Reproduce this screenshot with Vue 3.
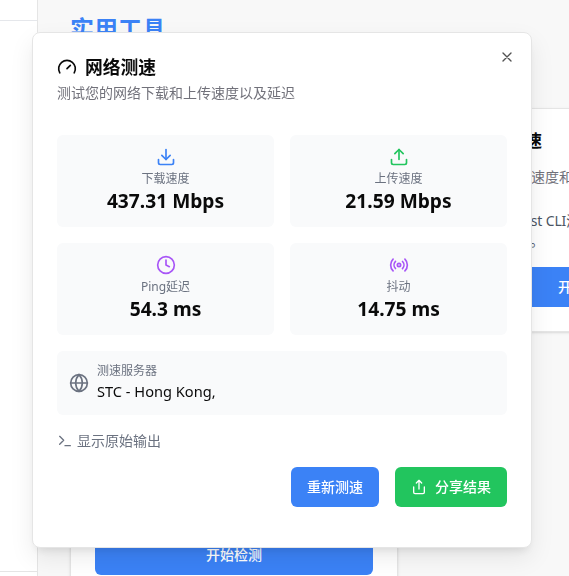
<script setup>
const stats = [
  { label: '下载速度', value: '437.31 Mbps', tone: 'blue', icon: ['M21 15v4a2 2 0 0 1-2 2H5a2 2 0 0 1-2-2v-4', 'M7 10l5 5 5-5', 'M12 15V3'] },
  { label: '上传速度', value: '21.59 Mbps', tone: 'green', icon: ['M21 15v4a2 2 0 0 1-2 2H5a2 2 0 0 1-2-2v-4', 'M17 8l-5-5-5 5', 'M12 3v12'] },
  { label: 'Ping延迟', value: '54.3 ms', tone: 'purple', icon: ['M22 12a10 10 0 1 1-20 0 10 10 0 0 1 20 0', 'M12 6v6l4 2'] },
  {
    label: '抖动', value: '14.75 ms', tone: 'purple',
    icon: [
      'M4.9 19.1C1 15.2 1 8.8 4.9 4.9',
      'M7.8 16.2c-2.3-2.3-2.3-6.1 0-8.5',
      'M14 12a2 2 0 1 1-4 0 2 2 0 0 1 4 0',
      'M16.2 7.8c2.3 2.3 2.3 6.1 0 8.5',
      'M19.1 4.9C23 8.8 23 15.1 19.1 19'
    ]
  }
]
</script>

<template>
  <div class="page">
    <aside class="sidebar">
      <div class="side-head"></div>
      <div class="side-body"></div>
    </aside>
    <main class="main">
      <h1 class="heading">实用工具</h1>
      <div class="tools">
        <section class="card"></section>
        <section class="card">
          <h2 class="card-title">
            <svg class="icon" viewBox="0 0 24 24"><path d="m12 14 4-4" /><path d="M3.34 19a10 10 0 1 1 17.32 0" /></svg>
            网络测速
          </h2>
          <p class="card-sub">测试您的网络速度和延迟</p>
          <p class="card-text">使用 Speedtest CLI测试<br />网络连接速度。</p>
          <button class="card-btn">开始测速</button>
        </section>
        <section class="card tall">
          <button class="card-btn">开始检测</button>
        </section>
      </div>
    </main>
  </div>

  <div class="overlay">
    <div class="dialog" role="dialog">
      <button class="close">
        <svg class="icon small" viewBox="0 0 24 24"><path d="M18 6 6 18M6 6l12 12" /></svg>
      </button>
      <header class="header">
        <h2 class="title">
          <svg class="icon" viewBox="0 0 24 24"><path d="m12 14 4-4" /><path d="M3.34 19a10 10 0 1 1 17.32 0" /></svg>
          <span>网络测速</span>
        </h2>
        <p class="subtitle">测试您的网络下载和上传速度以及延迟</p>
      </header>
      <div class="stats">
        <div v-for="s in stats" :key="s.label" class="stat">
          <svg class="icon" :class="s.tone" viewBox="0 0 24 24"><path v-for="d in s.icon" :key="d" :d="d" /></svg>
          <span class="label">{{ s.label }}</span>
          <span class="value">{{ s.value }}</span>
        </div>
      </div>
      <div class="server">
        <svg class="icon" viewBox="0 0 24 24">
          <circle cx="12" cy="12" r="10" />
          <path d="M12 2a14.5 14.5 0 0 0 0 20 14.5 14.5 0 0 0 0-20" />
          <path d="M2 12h20" />
        </svg>
        <div class="server-info">
          <span class="label">测速服务器</span>
          <span class="server-name">STC - Hong Kong,</span>
        </div>
      </div>
      <button class="raw">
        <svg class="icon small" viewBox="0 0 24 24"><path d="m4 17 6-6-6-6M12 19h8" /></svg>
        <span>显示原始输出</span>
      </button>
      <footer class="actions">
        <button class="btn primary">重新测速</button>
        <button class="btn success">
          <svg class="icon small" viewBox="0 0 24 24"><path d="M4 12v8a2 2 0 0 0 2 2h12a2 2 0 0 0 2-2v-8" /><path d="m16 6-4-4-4 4M12 2v13" /></svg>
          <span>分享结果</span>
        </button>
      </footer>
    </div>
  </div>
</template>

<style>
body { margin: 0; overflow: hidden; }
</style>

<style scoped>
.page, .overlay {
  font-family: "Noto Sans", "Noto Sans CJK SC", sans-serif;
  color: #0a0a0a;
  box-sizing: border-box;
}
.page *, .overlay * { box-sizing: border-box; }
h1, h2, p { margin: 0; }
button { border: 0; padding: 0; background: none; font: inherit; color: inherit; }
.page { display: flex; height: 576px; overflow: hidden; background: #f8f8f8; }
.sidebar { display: flex; flex-direction: column; flex: none; width: 38px; background: #fff; border-right: 1px solid #e5e5e5; }
.side-head { height: 21px; border-bottom: 1px solid #e5e7eb; }
.side-body { height: 551px; border-bottom: 1px solid #e5e5e5; }
.main { flex: none; width: 712px; padding: 13px 0 0 32px; }
.heading { height: 32px; margin-bottom: 63px; font-size: 24px; line-height: 32px; font-weight: 700; color: #3b82f6; }
.tools { display: grid; grid-template-columns: 328px 328px; grid-template-rows: 224px 244px; gap: 24px; }
.card { display: flex; flex-direction: column; padding: 24px; background: #fff; border: 1px solid #e5e5e5; border-radius: 8px; box-shadow: 0 1px 3px rgba(0, 0, 0, .1), 0 1px 2px -1px rgba(0, 0, 0, .1); }
.card-title { display: flex; align-items: center; gap: 8px; height: 16px; font-size: 16.8px; line-height: 18px; font-weight: 700; }
.card-sub { margin-top: 18px; font-size: 14px; line-height: 20px; color: #71717a; }
.card-text { margin-top: 24px; font-size: 14px; line-height: 20px; letter-spacing: -.15px; color: #4b5563; }
.card-btn { margin-top: auto; flex: none; height: 40px; padding-bottom: 2px; border-radius: 6px; background: #3b82f6; color: #fff; font-size: 14px; font-weight: 500; }
.overlay { position: fixed; inset: 0; display: flex; align-items: flex-start; padding: 32px; }
.dialog { position: relative; flex: none; display: flex; flex-direction: column; width: 500px; height: 516px; padding: 24px; background: #fff; border: 1px solid #e5e5e5; border-radius: 8px; box-shadow: 0 10px 24px rgba(0, 0, 0, .08), 0 6px 10px -4px rgba(0, 0, 0, .1); }
.close { position: absolute; top: 16px; right: 16px; display: flex; opacity: .7; }
.icon { display: block; flex: none; width: 20px; height: 20px; fill: none; stroke: currentColor; stroke-width: 2; stroke-linecap: round; stroke-linejoin: round; }
.small { width: 16px; height: 16px; }
.blue { color: #3b82f6; }
.green { color: #22c55e; }
.purple { color: #a855f7; }
.title { display: flex; align-items: center; gap: 8px; height: 20px; font-size: 17.8px; line-height: 20px; font-weight: 700; }
.subtitle { margin-top: 6px; font-size: 14px; line-height: 20px; color: #71717a; }
.stats { display: grid; grid-template-columns: 1fr 1fr; gap: 16px; margin-top: 32px; }
.stat { display: flex; flex-direction: column; align-items: center; height: 92px; padding: 12px; border-radius: 6px; background: #f9fafb; }
.label { font-size: 12px; line-height: 16px; color: #6b7280; }
.stat .label { margin-top: 4px; }
.value { font-size: 19.2px; line-height: 28px; font-weight: 700; }
.server { display: flex; align-items: center; gap: 8px; height: 64px; margin-top: 16px; padding: 12px; border-radius: 6px; background: #f9fafb; color: #6b7280; }
.server-info { display: flex; flex-direction: column; }
.server-name { padding-top: 1px; font-size: 14.6px; line-height: 23px; color: #0a0a0a; }
.raw { display: flex; align-items: center; align-self: flex-start; gap: 4px; height: 20px; margin-top: 16px; font-size: 14px; line-height: 20px; color: #6b7280; }
.actions { display: flex; justify-content: flex-end; gap: 16px; margin-top: 16px; }
.btn { display: flex; align-items: center; gap: 8px; height: 40px; padding: 0 16px; border-radius: 6px; color: #fff; font-size: 14px; line-height: 20px; font-weight: 500; }
.primary { background: #3b82f6; padding-bottom: 1px; }
.btn span { padding-bottom: 1px; }
.success { background: #22c55e; }
</style>
